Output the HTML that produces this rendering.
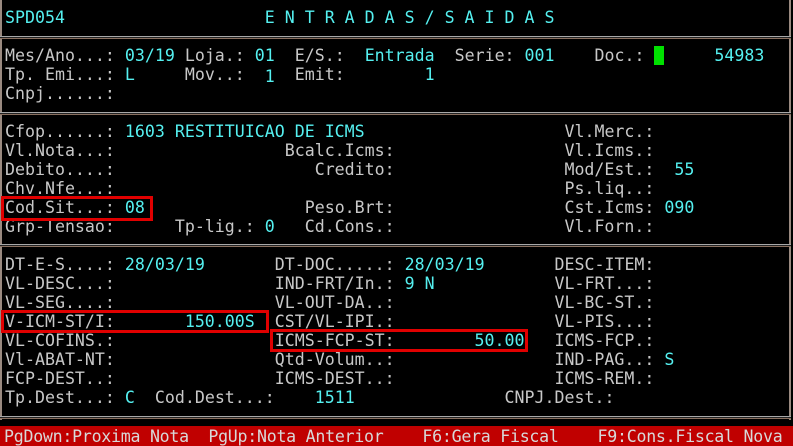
<!DOCTYPE html>
<html><head><meta charset="utf-8"><style>
html,body{margin:0;padding:0;background:#000;width:793px;height:446px;overflow:hidden}
body{position:relative;font-family:"DejaVu Sans Mono","Liberation Mono",monospace;font-size:16.6px;color:#c8c8c8}
.r{position:absolute;left:5px;height:19px;line-height:19px;white-space:pre;margin:0;font-family:"DejaVu Sans Mono","Liberation Mono",monospace;font-size:16.6px}
.c{color:#55f0f0}
.hl{position:absolute;left:0;width:791px;height:3px;border-top:1px solid #a8a8a8;border-bottom:1px solid #8a7060;box-sizing:border-box;background:#222}
.vl{position:absolute;top:0;width:2px;height:420px;background:#9a8a80}
.box{position:absolute;border:3px solid #e00000;box-sizing:border-box}
.bar{position:absolute;left:0;top:426px;width:793px;height:20px;background:#c00000}
</style></head><body>
<div class="vl" style="left:0"></div>
<div class="vl" style="left:789px"></div>
<div class="hl" style="top:36px"></div>
<div class="hl" style="top:112px"></div>
<div class="hl" style="top:244px"></div>
<div class="hl" style="top:416px"></div>

<pre class="r c" style="top:8px">SPD054                    E N T R A D A S / S A I D A S</pre>

<pre class="r" style="top:46px">Mes/Ano...: <span class="c">03/19</span> Loja.: <span class="c">01</span>  E/S.:  <span class="c">Entrada</span>  Serie: <span class="c">001</span>    Doc.: <span style="background:#00e000"> </span>     <span class="c">54983</span></pre>
<pre class="r" style="top:65px">Tp. Emi...: <span class="c">L</span>     Mov..:  <span class="c" style="position:relative;top:2px">1</span>  Emit:        <span class="c">1</span></pre>
<pre class="r" style="top:84px">Cnpj......:</pre>

<pre class="r" style="top:122px">Cfop......: <span class="c">1603 RESTITUICAO DE ICMS</span>                    Vl.Merc.:</pre>
<pre class="r" style="top:141px">Vl.Nota...:                 Bcalc.Icms:                 Vl.Icms.:</pre>
<pre class="r" style="top:160px">Debito....:                    Credito:                 Mod/Est.:  <span class="c">55</span></pre>
<pre class="r" style="top:179px">Chv.Nfe...:                                             Ps.liq..:</pre>
<pre class="r" style="top:198px">Cod.Sit...: <span class="c">08</span>                Peso.Brt:                 Cst.Icms: <span class="c">090</span></pre>
<pre class="r" style="top:217px">Grp-Tensao:      Tp-lig.: <span class="c">0</span>   Cd.Cons.:                 Vl.Forn.:</pre>

<pre class="r" style="top:255px">DT-E-S....: <span class="c">28/03/19</span>       DT-DOC.....: <span class="c">28/03/19</span>       DESC-ITEM:</pre>
<pre class="r" style="top:274px">VL-DESC...:                IND-FRT/In.: <span class="c">9 N</span>            VL-FRT...:</pre>
<pre class="r" style="top:293px">VL-SEG....:                VL-OUT-DA..:                VL-BC-ST.:</pre>
<pre class="r" style="top:312px">V-ICM-ST/I:       <span class="c">150.00S</span>  CST/VL-IPI.:                VL-PIS...:</pre>
<pre class="r" style="top:331px">VL-COFINS.:                ICMS-FCP-ST:        <span class="c">50.00</span>   ICMS-FCP.:</pre>
<pre class="r" style="top:350px">Vl-ABAT-NT:                Qtd-Volum..:                IND-PAG..: <span class="c">S</span></pre>
<pre class="r" style="top:369px">FCP-DEST..:                ICMS-DEST..:                ICMS-REM.:</pre>
<pre class="r" style="top:388px">Tp.Dest...: <span class="c">C</span>  Cod.Dest...:    <span class="c">1511</span>               CNPJ.Dest.:</pre>

<div class="box" style="left:1px;top:196px;width:152px;height:25px"></div>
<div class="box" style="left:1px;top:310px;width:268px;height:23px"></div>
<div class="box" style="left:270px;top:329px;width:258px;height:23px"></div>

<div class="bar"></div>
<pre class="r" style="top:427px;left:4px;color:#d8d8d8;letter-spacing:-0.26px">PgDown:Proxima Nota  PgUp:Nota Anterior    F6:Gera Fiscal    F9:Cons.Fiscal Nova</pre>
</body></html>
